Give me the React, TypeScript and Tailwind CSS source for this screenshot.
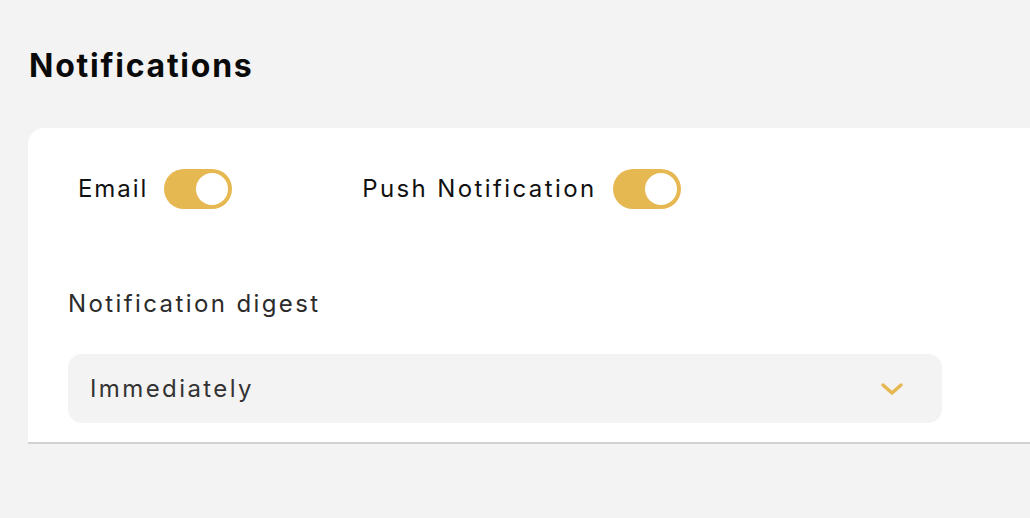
import React from "react";

function Toggle() {
  return (
    <div className="w-[68px] h-[40px] rounded-full bg-[#e6b852] p-[4px] flex justify-end items-center shrink-0">
      <div className="w-[32px] h-[32px] rounded-full bg-white" />
    </div>
  );
}

export default function App() {
  return (
    <div
      className="min-h-[518px] bg-[#f3f3f3] overflow-hidden"
      style={{ fontFamily: "Inter, 'Noto Sans', sans-serif" }}
    >
      <h1 className="pl-[29px] pt-[44px] text-[32px] leading-[44px] font-bold text-[#0a0a0a] tracking-[0.055em]">
        Notifications
      </h1>
      <div className="ml-[28px] mt-[40px] bg-white rounded-tl-[16px] border-b-2 border-[#d2d2d2] pl-[40px] pt-[41px] pb-[19px]">
        <div className="flex items-center pl-[10px]">
          <span className="text-[24px] leading-[40px] text-[#111] tracking-[0.08em]">Email</span>
          <div className="ml-[16px]">
            <Toggle />
          </div>
          <span className="ml-[130px] text-[24px] leading-[40px] text-[#111] tracking-[0.1em]">Push Notification</span>
          <div className="ml-[16px]">
            <Toggle />
          </div>
        </div>
        <div className="mt-[80px] text-[24px] leading-[30px] text-[#2b2b2b] tracking-[0.1em]">Notification digest</div>
        <div className="mt-[35px] w-[874px] h-[69px] rounded-[14px] bg-[#f3f3f3] flex items-center justify-between pl-[22px] pr-[38px]">
          <span className="text-[24px] text-[#333] tracking-[0.1em]">Immediately</span>
          <svg width="24" height="14" viewBox="0 0 24 14" fill="none">
            <path d="M3 3l9 8 9-8" stroke="#e6b852" strokeWidth="3.5" strokeLinecap="round" strokeLinejoin="round" />
          </svg>
        </div>
      </div>
    </div>
  );
}
